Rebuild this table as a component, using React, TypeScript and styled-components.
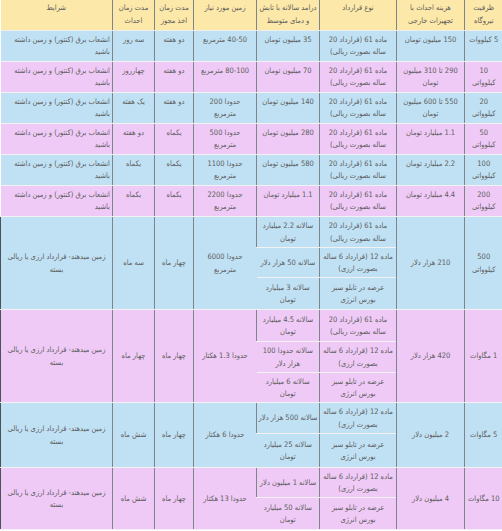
import styled, { createGlobalStyle } from 'styled-components'

const GlobalStyle = createGlobalStyle`
  html, body {
    margin: 0;
    padding: 0;
    background: #ffffff;
  }
  body {
    font-family: 'DejaVu Sans Condensed', 'DejaVu Sans', sans-serif;
  }
`

type Tone = 'blue' | 'pink'

const tones = {
  head: '#fce8a8',
  blue: '#c0e1f4',
  pink: '#efcaf6',
}

const cols = [38, 68, 77, 63, 63, 39, 42, 112]

const headers = [
  'ظرفیت نیروگاه',
  'هزینه احداث با تجهیزات خارجی',
  'نوع قرارداد',
  'درامد سالانه با تابش و دمای متوسط',
  'زمین مورد نیاز',
  'مدت زمان اخذ مجوز',
  'مدت زمان احداث',
  'شرایط',
]

const rial = 'ماده 61 (قرارداد 20 ساله بصورت ریالی)'
const arzi = 'ماده 12 (قرارداد 6 ساله بصورت ارزی)'
const bourse = 'عرضه در تابلو سبز بورس انرژی'
const kontor = 'انشعاب برق (کنتور) و زمین داشته باشید'
const land = 'زمین میدهند- قرارداد ارزی یا ریالی بسته'

const small = [
  ['5 کیلووات', '150 میلیون تومان', '35 میلیون تومان', '40-50 مترمربع', 'دو هفته', 'سه روز'],
  ['10 کیلوواتی', '290 تا 310 میلیون تومان', '70 میلیون تومان', '80-100 مترمربع', 'دو هفته', 'چهارروز'],
  ['20 کیلوواتی', '550 تا 600 میلیون تومان', '140 میلیون تومان', 'حدودا 200 مترمربع', 'دو هفته', 'یک هفته'],
  ['50 کیلوواتی', '1.1 میلیارد تومان', '280 میلیون تومان', 'حدودا 500 مترمربع', 'یکماه', 'دو هفته'],
  ['100 کیلوواتی', '2.2 میلیارد تومان', '580 میلیون تومان', 'حدودا 1100 مترمربع', 'یکماه', 'یکماه'],
  ['200 کیلوواتی', '4.4 میلیارد تومان', '1.1 میلیارد تومان', 'حدودا 2200 مترمربع', 'یکماه', 'یکماه'],
]

type Big = {
  size: string
  cost: string
  deals: { kind: string; income: string; h: number }[]
  area: string
  permit: string
  build: string
}

const big: Big[] = [
  {
    size: '500 کیلوواتی',
    cost: '210 هزار دلار',
    deals: [
      { kind: rial, income: 'سالانه 2.2 میلیارد تومان', h: 31 },
      { kind: arzi, income: 'سالانه 50 هزار دلار', h: 30 },
      { kind: bourse, income: 'سالانه 3 میلیارد تومان', h: 32 },
    ],
    area: 'حدودا 6000 مترمربع',
    permit: 'چهار ماه',
    build: 'سه ماه',
  },
  {
    size: '1 مگاوات',
    cost: '420 هزار دلار',
    deals: [
      { kind: rial, income: 'سالانه 4.5 میلیارد تومان', h: 32 },
      { kind: arzi, income: 'سالانه حدودا 100 هزار دلار', h: 31 },
      { kind: bourse, income: 'سالانه 6 میلیارد تومان', h: 29 },
    ],
    area: 'حدودا 1.3 هکتار',
    permit: 'چهار ماه',
    build: 'چهار ماه',
  },
  {
    size: '5 مگاوات',
    cost: '2 میلیون دلار',
    deals: [
      { kind: arzi, income: 'سالانه 500 هزار دلار', h: 31 },
      { kind: bourse, income: 'سالانه 25 میلیارد تومان', h: 34 },
    ],
    area: 'حدودا 6 هکتار',
    permit: 'چهار ماه',
    build: 'شش ماه',
  },
  {
    size: '10 مگاوات',
    cost: '4 میلیون دلار',
    deals: [
      { kind: arzi, income: 'سالانه 1 میلیون دلار', h: 28 },
      { kind: bourse, income: 'سالانه 50 میلیارد تومان', h: 32 },
    ],
    area: 'حدودا 13 هکتار',
    permit: 'چهار ماه',
    build: 'شش ماه',
  },
]

function App() {
  return (
    <>
      <GlobalStyle />
      <Table>
        <colgroup>
          {cols.map((w, i) => (
            <Col key={i} $w={w} />
          ))}
        </colgroup>
        <thead>
          <Row $h={30}>
            {headers.map((h) => (
              <HeadCell key={h}>{h}</HeadCell>
            ))}
          </Row>
        </thead>
        <tbody>
          {small.map((r, i) => {
            const tone: Tone = i % 2 === 0 ? 'blue' : 'pink'
            return (
              <Row key={r[0]} $h={31}>
                <Cell $tone={tone}>{r[0]}</Cell>
                <Cell $tone={tone}>{r[1]}</Cell>
                <Cell $tone={tone} $pad={3}>{rial}</Cell>
                <Cell $tone={tone}>{r[2]}</Cell>
                <Cell $tone={tone} $pad={5}>{r[3]}</Cell>
                <Cell $tone={tone}>{r[4]}</Cell>
                <Cell $tone={tone}>{r[5]}</Cell>
                <Cell $tone={tone} $right>{kontor}</Cell>
              </Row>
            )
          })}
          {big.map((b, i) => {
            const tone: Tone = i % 2 === 0 ? 'blue' : 'pink'
            const span = b.deals.length
            return b.deals.map((d, j) => (
              <Row key={b.size + j} $h={d.h}>
                {j === 0 && (
                  <>
                    <Cell $tone={tone} $mid rowSpan={span}>{b.size}</Cell>
                    <Cell $tone={tone} $mid rowSpan={span}>{b.cost}</Cell>
                  </>
                )}
                <Cell $tone={tone} $mid $pad={3}>{d.kind}</Cell>
                <Cell $tone={tone} $mid $pad={1}>{d.income}</Cell>
                {j === 0 && (
                  <>
                    <Cell $tone={tone} $mid $pad={5} rowSpan={span}>{b.area}</Cell>
                    <Cell $tone={tone} $mid rowSpan={span}>{b.permit}</Cell>
                    <Cell $tone={tone} $mid rowSpan={span}>{b.build}</Cell>
                    <Cell $tone={tone} $mid $edge rowSpan={span}>{land}</Cell>
                  </>
                )}
              </Row>
            ))
          })}
        </tbody>
      </Table>
    </>
  )
}

export default App

const Table = styled.table`
  direction: rtl;
  width: 502px;
  table-layout: fixed;
  border-collapse: collapse;
  font-family: 'DejaVu Sans Condensed', 'DejaVu Sans', sans-serif;
  font-size: 7.5px;
  line-height: 12.5px;
  color: #5d5d5d;
`

const Col = styled.col<{ $w: number }>`
  width: ${(p) => p.$w}px;
`

const Row = styled.tr<{ $h: number }>`
  height: ${(p) => p.$h}px;
`

const HeadCell = styled.th`
  background: ${tones.head};
  font-weight: normal;
  text-align: center;
  vertical-align: top;
  padding: 2px 1px 1px;
  border-bottom: 1px solid #eeeeee;
  border-left: 1px solid #7d848b;
  &:last-child {
    border-left: none;
  }
`

const Cell = styled.td<{ $tone: Tone; $right?: boolean; $mid?: boolean; $edge?: boolean; $pad?: number }>`
  background: ${(p) => tones[p.$tone]};
  text-align: ${(p) => (p.$right ? 'right' : 'center')};
  vertical-align: ${(p) => (p.$mid ? 'middle' : 'top')};
  padding: 3px ${(p) => p.$pad ?? 2}px 1px;
  border-bottom: 1px solid #f2f2f2;
  border-left: 1px solid #7d848b;
  &:last-child {
    border-left: ${(p) => (p.$edge ? '1px solid #4b525a' : 'none')};
  }
`
